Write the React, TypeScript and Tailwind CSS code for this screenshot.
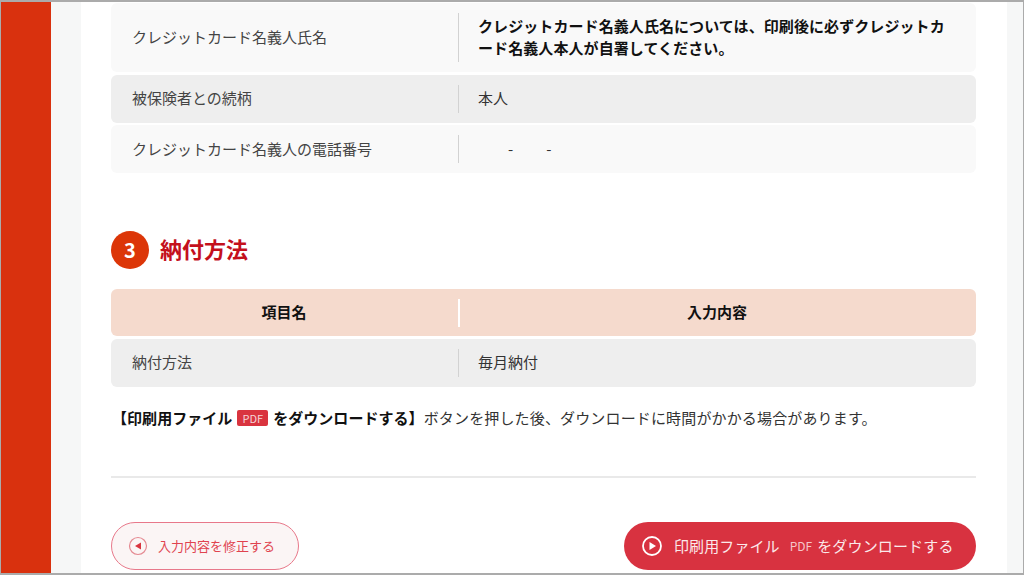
const font = { fontFamily: '"Noto Sans CJK JP", "Noto Sans", sans-serif' };

function Row({ label, children, tone, className, pad = "pb-[1px]" }: { label: string; children: React.ReactNode; tone: string; className: string; pad?: string }) {
  return (
    <div className={`flex items-center rounded-md ${tone} ${className}`}>
      <div className={`w-[347px] shrink-0 pl-[21px] text-[15px] text-[#444444] ${pad}`}>{label}</div>
      <div className={`flex h-[calc(100%-20px)] flex-1 items-center border-l border-[#d2d2d2] pl-[19px] pr-[20px] text-[15px] text-[#333333] ${pad}`}>{children}</div>
    </div>
  );
}

export default function App() {
  return (
    <div className="h-[575px] w-[1024px] overflow-hidden border border-b-2 border-t-2 border-[#ababab] bg-[#f6f7f7]" style={font}>
      <div className="flex h-full">
        <div className="w-[50px] shrink-0 bg-[#d9310e]" />
        <div className="ml-[30px] h-full w-[926px] shrink-0 bg-white pl-[30px] pr-[31px] pt-[1px]">
          <div className="flex flex-col gap-[3px]">
            <Row label="クレジットカード名義人氏名" tone="bg-[#f9f9f9]" className="h-[69px]">
              <span className="-mt-[1px] text-[15px] font-bold leading-[22px] tracking-[0.08px] text-[#111111]">クレジットカード名義人氏名については、印刷後に必ずクレジットカード名義人本人が自署してください。</span>
            </Row>
            <Row label="被保険者との続柄" tone="bg-[#eeeeee]" className="h-[48px]">本人</Row>
            <Row label="クレジットカード名義人の電話番号" tone="bg-[#f9f9f9] -mt-[1px]" className="h-[48px]" pad="pb-0">
              <span className="pl-[30px]">-</span>
              <span className="pl-[33px]">-</span>
            </Row>
          </div>
          <div className="mt-[58px] flex items-center gap-[11px]">
            <div className="flex h-[38px] w-[38px] items-center justify-center rounded-full bg-[#dc3608] text-[20px] font-bold text-white">3</div>
            <h2 className="-mt-[3px] text-[22px] font-bold text-[#c4101c]">納付方法</h2>
          </div>
          <div className="mt-[20px] flex h-[47px] items-center rounded-md bg-[#f5dacd] text-[15px] font-bold text-[#111111]">
            <div className="w-[347px] shrink-0 pr-[1px] text-center">項目名</div>
            <div className="flex h-[28px] flex-1 items-center justify-center border-l-2 border-white pr-[2px]">入力内容</div>
          </div>
          <Row label="納付方法" tone="bg-[#eeeeee]" className="mt-[3px] h-[48px]">毎月納付</Row>
          <p className="mt-[20px] flex h-[22px] items-center whitespace-nowrap pl-[1px] text-[15px] tracking-[0.05px] text-[#333333]">
            <b className="text-[#111111]">【印刷用ファイル</b>
            <span className="ml-[5px] rounded-[2px] bg-[#d9343f] px-[5px] text-[11px] leading-[16px] text-[#f5d5d7]">PDF</span>
            <b className="ml-[5px] text-[#111111]">をダウンロードする】</b>
            <span className="tracking-[0.15px]">ボタンを押した後、ダウンロードに時間がかかる場合があります。</span>
          </p>
          <hr className="mt-[47px] h-[2px] border-0 bg-[#e9e9e9]" />
          <div className="mt-[44px] flex items-center justify-between">
            <button className="flex h-[48px] w-[188px] items-center gap-[10px] rounded-full border border-[#e8788a] bg-[#fbf5f5] pl-[16px] text-[13px] text-[#e0434f]">
              <svg width="20" height="20" viewBox="0 0 20 20" fill="none">
                <circle cx="10" cy="10" r="8.5" stroke="#e58a92" strokeWidth="1.2" />
                <path d="M13 6.5v7L7 10z" fill="#d9343f" />
              </svg>
              入力内容を修正する
            </button>
            <button className="flex h-[48px] w-[352px] items-center rounded-full bg-[#d83240] pl-[17px] text-[15px] text-[#fbe9ea]">
              <svg width="22" height="22" viewBox="0 0 22 22" fill="none">
                <circle cx="11" cy="11" r="9" stroke="#ffffff" strokeWidth="1.8" />
                <path d="M8.5 7v8l6.5-4z" fill="#ffffff" />
              </svg>
              <span className="ml-[11px] tracking-[0.1px]">印刷用ファイル</span>
              <span className="ml-[10px] mr-[5px] text-[12px] text-[#f5c5c9]">PDF</span>
              <span className="tracking-[0.15px]">をダウンロードする</span>
            </button>
          </div>
        </div>
      </div>
    </div>
  );
}
